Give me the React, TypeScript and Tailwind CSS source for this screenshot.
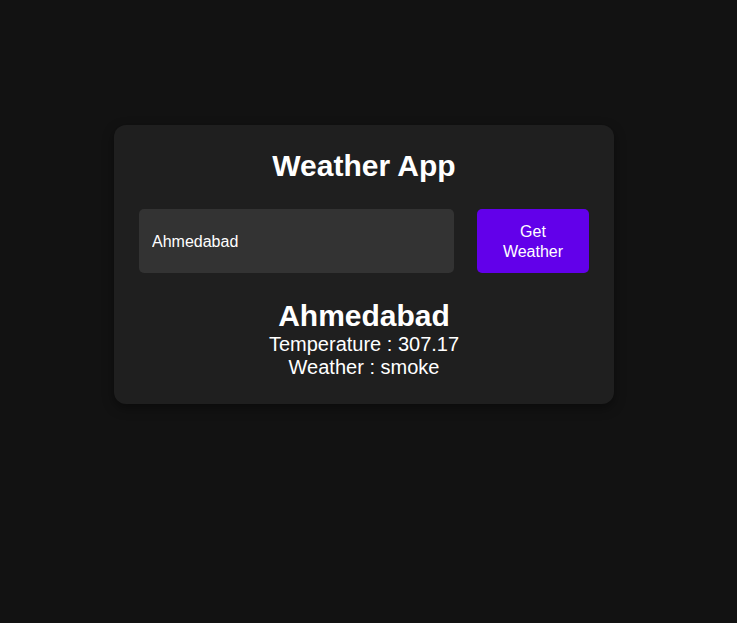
import { useState } from "react";

const App = () => {
  const [city, setCity] = useState("Ahmedabad");

  return (
    <div
      className="min-h-screen w-full bg-[#121212] pt-[125px] pl-[114px] text-white"
      style={{ fontFamily: '"Liberation Sans", Arial, sans-serif' }}
    >
      <div className="w-[500px] rounded-xl bg-[#1f1f1f] px-[25px] pt-[24px] pb-[25px] shadow-[0_4px_12px_rgba(0,0,0,0.4)]">
        <h1 className="text-center text-[30px] font-bold leading-[34px]">Weather App</h1>

        <div className="mt-[26px] flex h-[64px] gap-[23px]">
          <input
            value={city}
            onChange={(e) => setCity(e.target.value)}
            className="h-full w-[315px] rounded-[5px] bg-[#333333] px-[13px] pt-[2px] text-[16px] text-white outline-none"
          />
          <button className="h-full w-[112px] rounded-[5px] bg-[#6200ea] px-3 pt-[1px] text-center text-[16px] leading-[20px] text-white">
            Get Weather
          </button>
        </div>

        <div className="mt-[25px] text-center">
          <h2 className="text-[30px] font-bold leading-[35px]">Ahmedabad</h2>
          <p className="text-[20px] leading-[23px]">Temperature : 307.17</p>
          <p className="text-[20px] leading-[23px]">Weather : smoke</p>
        </div>
      </div>
    </div>
  );
};

export default App;
